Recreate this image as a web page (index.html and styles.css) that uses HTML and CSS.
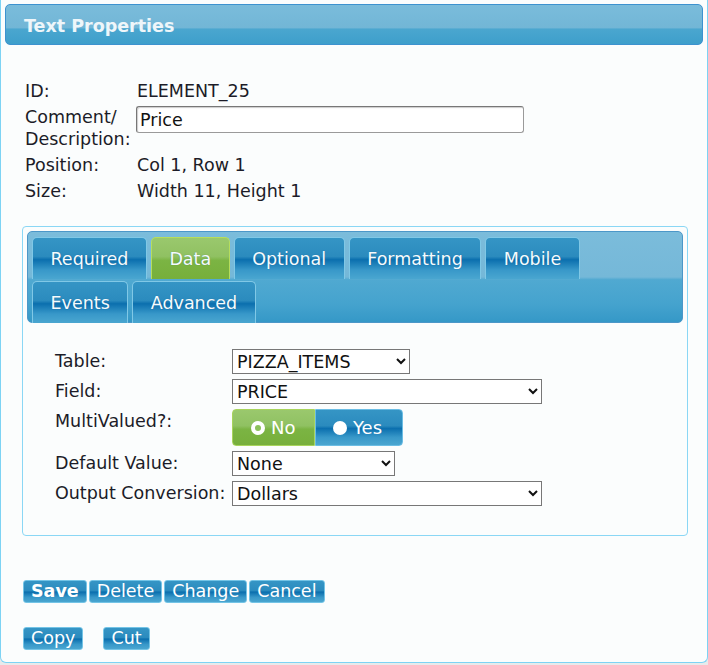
FILE: index.html
```html
<!DOCTYPE html>
<html lang="en">
<head>
    <meta charset="UTF-8">
    <meta name="viewport" content="width=device-width, initial-scale=1.0">
    <title>Text Properties</title>
    <link rel="stylesheet" href="styles.css">
</head>
<body>
    <div class="panel">
        <div class="panel-head">Text Properties</div>
        <div class="panel-body">
            <div class="info">
                <div class="info-label">ID:</div>
                <div class="info-value">ELEMENT_25</div>
                <div class="info-label">Comment/<br>Description:</div>
                <div class="info-value"><input type="text" class="comment" value="Price"></div>
                <div class="info-label">Position:</div>
                <div class="info-value">Col 1, Row 1</div>
                <div class="info-label">Size:</div>
                <div class="info-value">Width 11, Height 1</div>
            </div>

            <div class="tabbox">
                <div class="tabbar">
                    <div class="tabrow">
                        <div class="tab">Required</div>
                        <div class="tab active">Data</div>
                        <div class="tab">Optional</div>
                        <div class="tab">Formatting</div>
                        <div class="tab">Mobile</div>
                    </div>
                    <div class="tabrow">
                        <div class="tab">Events</div>
                        <div class="tab">Advanced</div>
                    </div>
                </div>
                <div class="form">
                    <label class="form-label" for="table">Table:</label>
                    <div><select id="table" class="sel sel-table"><option>PIZZA_ITEMS</option></select></div>
                    <label class="form-label" for="field">Field:</label>
                    <div><select id="field" class="sel sel-wide"><option>PRICE</option></select></div>
                    <div class="form-label">MultiValued?:</div>
                    <div class="toggle">
                        <span class="toggle-opt on"><span class="radio checked"></span>No</span>
                        <span class="toggle-opt"><span class="radio"></span>Yes</span>
                    </div>
                    <label class="form-label" for="default">Default Value:</label>
                    <div><select id="default" class="sel sel-default"><option>None</option></select></div>
                    <label class="form-label" for="conv">Output Conversion:</label>
                    <div><select id="conv" class="sel sel-wide"><option>Dollars</option></select></div>
                </div>
            </div>

            <div class="actions">
                <button class="btn btn-main">Save</button>
                <button class="btn">Delete</button>
                <button class="btn">Change</button>
                <button class="btn">Cancel</button>
            </div>
            <div class="actions actions-clip">
                <button class="btn">Copy</button>
                <button class="btn">Cut</button>
            </div>
        </div>
    </div>
</body>
</html>
```

FILE: styles.css
```css
:root {
    --font-family: "DejaVu Sans", Verdana, sans-serif;
    --tab-blue: linear-gradient(180deg, #3595c5 0%, #2b8bbe 45%, #0b6fae 53%, #3898c9 78%, #4aa6d0 100%);
    --tab-green: linear-gradient(180deg, #9ac86d 0%, #90c162 45%, #7bb443 55%, #77af3c 100%);
}

html, body {
    margin: 0;
    background: #e8eaeb;
}

body {
    font-family: var(--font-family);
    font-size: 17.5px;
    color: #1c1c28;
}

.panel {
    box-sizing: border-box;
    width: 708px;
    height: 663px;
    border: 1px solid #7dd3f4;
    border-top: none;
    border-radius: 0 0 6px 6px;
    background: #fbfdfd;
    padding-top: 4px;
}

.panel-head {
    margin: 0 4px;
    height: 41px;
    box-sizing: border-box;
    border: 1px solid #3d92cf;
    border-radius: 5px;
    background: linear-gradient(180deg, #7abcdb 0%, #72b6d6 58%, #4aa6cf 62%, #3e9fcb 100%);
    color: #eef6fa;
    font-weight: bold;
    font-size: 17.5px;
    line-height: 42px;
    padding-left: 18px;
}

.panel-body {
    padding: 0 21px;
}

.info {
    display: grid;
    grid-template-columns: 112px 1fr;
    row-gap: 4px;
    margin: 35px 0 0 3px;
    line-height: 22px;
}

.comment {
    box-sizing: border-box;
    width: 388px;
    height: 27px;
    margin-left: -1px;
    padding: 0 3px;
    font-family: var(--font-family);
    font-size: 17.5px;
    color: #111;
    border: 1px solid #9a9a9a;
    border-top-color: #777;
    border-left-color: #777;
    border-radius: 3px;
    box-shadow: inset 1px 1px 1px #ccc;
}

.tabbox {
    margin-top: 24px;
    width: 666px;
    box-sizing: border-box;
    border: 1px solid #8ad7f5;
    border-radius: 4px;
    padding: 4px 4px 29px;
}

.tabbar {
    display: flex;
    flex-direction: column;
    gap: 2px;
    height: 92px;
    box-sizing: border-box;
    padding: 5px 4px 0;
    border: 1px solid #4c97c8;
    border-radius: 5px;
    background: linear-gradient(180deg, #7bbcdb 0%, #75b8d8 50%, #50a9d1 53%, #45a3ce 80%, #3598c7 100%);
}

.tabrow {
    display: flex;
    gap: 4px;
}

.tab {
    box-sizing: border-box;
    height: 42px;
    padding: 0 17.5px;
    line-height: 42px;
    color: #f5fbfe;
    font-size: 17.5px;
    border: 1px solid #80c8e6;
    border-bottom: none;
    border-radius: 5px 5px 0 0;
    background: var(--tab-blue);
    text-shadow: 0 0 1px rgba(0, 60, 100, 0.4);
}

.tab.active {
    background: var(--tab-green);
    border-color: #b6dd5c;
}

.form {
    display: grid;
    grid-template-columns: 177px auto;
    row-gap: 5px;
    justify-items: start;
    margin: 26px 0 0 28px;
}

.form-label {
    line-height: 24px;
}

.sel {
    box-sizing: border-box;
    height: 25px;
    font-family: var(--font-family);
    font-size: 17.5px;
    color: #111;
    background: #fff;
    border: 1px solid #777;
    border-radius: 0;
    padding: 0;
}

.sel-table { width: 178px; }
.sel-wide { width: 310px; }
.sel-default { width: 163px; }

.toggle {
    display: flex;
    height: 37px;
}

.toggle-opt {
    display: flex;
    align-items: center;
    gap: 6px;
    box-sizing: border-box;
    height: 37px;
    padding: 0 18px;
    color: #fff;
    font-size: 18px;
    border: 1px solid #6bbde4;
    border-radius: 0 4px 4px 0;
    background: var(--tab-blue);
}

.toggle-opt.on {
    width: 83px;
    border-color: #a8d45c;
    border-radius: 4px 0 0 4px;
    background: var(--tab-green);
}

.toggle-opt + .toggle-opt {
    width: 88px;
    padding-left: 17px;
}

.radio {
    width: 14px;
    height: 14px;
    border-radius: 50%;
    background: #fff;
    box-sizing: border-box;
}

.radio.checked {
    border: 4px solid #fff;
    background: #8cc15a;
}

.actions {
    display: flex;
    gap: 2px;
    margin: 44px 0 0 1px;
}

.actions-clip {
    margin-top: 24px;
    gap: 20px;
}

.btn {
    height: 23px;
    padding: 0 7px;
    font-family: var(--font-family);
    font-size: 17.5px;
    line-height: 21px;
    color: #fff;
    border: 1px solid #74c4e6;
    border-radius: 3px;
    background: var(--tab-blue);
    cursor: pointer;
}

.btn-main {
    font-weight: bold;
}
```
